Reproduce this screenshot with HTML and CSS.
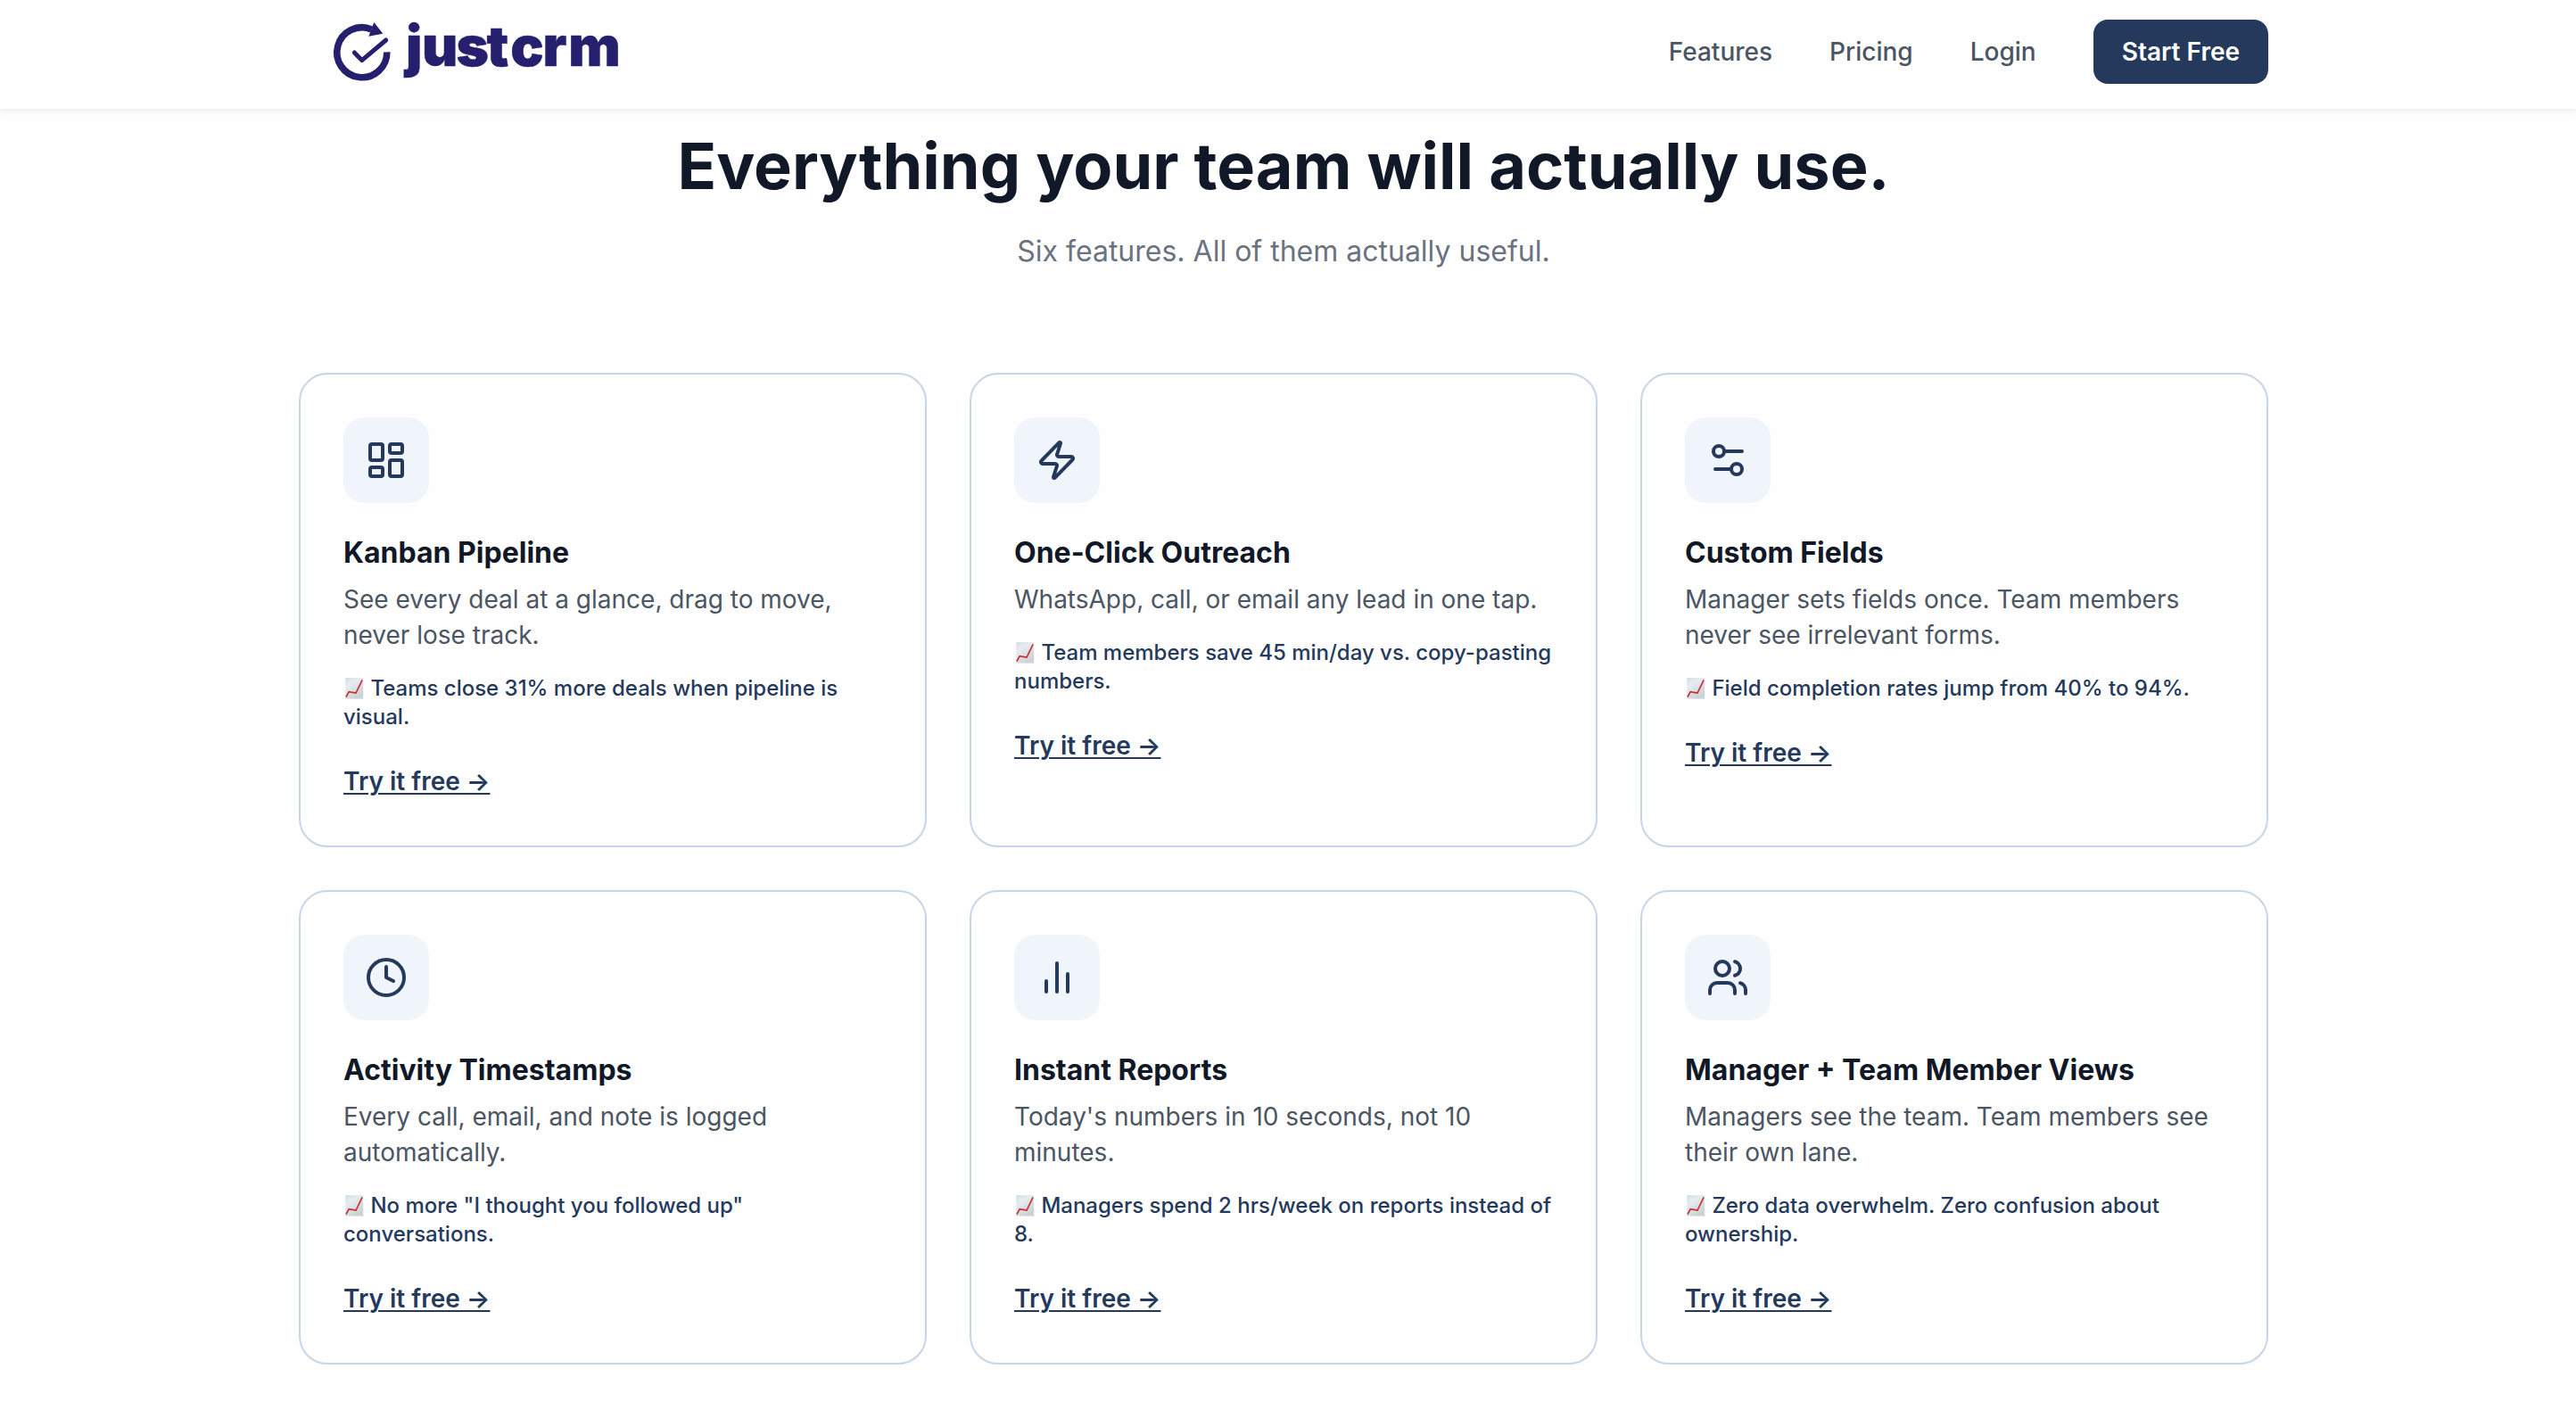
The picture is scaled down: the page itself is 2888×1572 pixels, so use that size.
FILE: index.html
```html
<!DOCTYPE html>
<html lang="en">
<head>
  <meta charset="UTF-8" />
  <meta name="viewport" content="width=device-width, initial-scale=1.0"/>
  <title>justcrm - Features</title>
  <link rel="stylesheet" href="styles.css">
</head>
<body>

  <!-- Shared chart icon for the stat lines -->
  <svg class="defs" width="0" height="0">
    <defs>
      <linearGradient id="paper" x1="0" y1="0" x2="0.6" y2="1">
        <stop offset="0" stop-color="#d5dce2"/>
        <stop offset="0.35" stop-color="#e6ecf2"/>
        <stop offset="1" stop-color="#ccd1d5"/>
      </linearGradient>
      <symbol id="chart" viewBox="0 0 24 24">
        <rect x="2.2" y="0" width="20" height="23.6" fill="url(#paper)"/>
        <path d="M3 21.5 6.2 15.6 14 17 21.2 2.4" fill="none" stroke="#c4302b" stroke-width="1.6"/>
      </symbol>
    </defs>
  </svg>

  <header>
    <div class="container nav">
      <a class="logo" href="#">
        <svg width="380" height="72" viewBox="-1 0 380 72">
          <path class="ring" d="M97.8 36.4A28 28 0 1 1 80.5 10.9"/>
          <path class="arrow" d="M83.3 3 93.3 15.7 77.3 18.7z"/>
          <path class="check" d="M61.3 37 69.7 45.6 96.7 23"/>
          <text x="119.1 137 175.4 209.4 236.2 272.4 301.2" y="52">justcrm</text>
        </svg>
      </a>
      <nav>
        <a href="#features">Features</a>
        <a href="#pricing">Pricing</a>
        <a href="#login">Login</a>
        <a class="btn" href="#start">Start Free</a>
      </nav>
    </div>
  </header>

  <main class="container" id="features">
    <h1>Everything your team will actually use.</h1>
    <p class="subtitle">Six features. All of them actually useful.</p>

    <div class="grid">
      <div class="card">
        <div class="icon">
          <svg viewBox="0 0 24 24"><rect x="3" y="3" width="7" height="9" rx="1"/><rect x="14" y="3" width="7" height="5" rx="1"/><rect x="14" y="12" width="7" height="9" rx="1"/><rect x="3" y="16" width="7" height="5" rx="1"/></svg>
        </div>
        <h3>Kanban Pipeline</h3>
        <p class="desc">See every deal at a glance, drag to move, never lose track.</p>
        <p class="stat"><svg class="chart"><use href="#chart"/></svg> Teams close 31% more deals when pipeline is visual.</p>
        <a class="try" href="#start">Try it free →</a>
      </div>

      <div class="card">
        <div class="icon">
          <svg viewBox="0 0 24 24"><path d="M4 14a1 1 0 0 1-.78-1.63l9.9-10.2a.5.5 0 0 1 .86.46l-1.92 6.02A1 1 0 0 0 13 10h7a1 1 0 0 1 .78 1.63l-9.9 10.2a.5.5 0 0 1-.86-.46l1.92-6.02A1 1 0 0 0 11 14z"/></svg>
        </div>
        <h3>One-Click Outreach</h3>
        <p class="desc">WhatsApp, call, or email any lead in one tap.</p>
        <p class="stat"><svg class="chart"><use href="#chart"/></svg> Team members save 45 min/day vs. copy-pasting numbers.</p>
        <a class="try" href="#start">Try it free →</a>
      </div>

      <div class="card">
        <div class="icon">
          <svg viewBox="0 0 24 24"><path d="M20 7h-9"/><path d="M14 17H5"/><circle cx="17" cy="17" r="3"/><circle cx="7" cy="7" r="3"/></svg>
        </div>
        <h3>Custom Fields</h3>
        <p class="desc">Manager sets fields once. Team members never see irrelevant forms.</p>
        <p class="stat"><svg class="chart"><use href="#chart"/></svg> Field completion rates jump from 40% to 94%.</p>
        <a class="try" href="#start">Try it free →</a>
      </div>

      <div class="card">
        <div class="icon">
          <svg viewBox="0 0 24 24"><circle cx="12" cy="12" r="10"/><polyline points="12 6 12 12 16 14"/></svg>
        </div>
        <h3>Activity Timestamps</h3>
        <p class="desc">Every call, email, and note is logged automatically.</p>
        <p class="stat"><svg class="chart"><use href="#chart"/></svg> No more "I thought you followed up" conversations.</p>
        <a class="try" href="#start">Try it free →</a>
      </div>

      <div class="card">
        <div class="icon">
          <svg viewBox="0 0 24 24"><path d="M18 20V10"/><path d="M12 20V4"/><path d="M6 20v-6"/></svg>
        </div>
        <h3>Instant Reports</h3>
        <p class="desc">Today's numbers in 10 seconds, not 10 minutes.</p>
        <p class="stat"><svg class="chart"><use href="#chart"/></svg> Managers spend 2 hrs/week on reports instead of 8.</p>
        <a class="try" href="#start">Try it free →</a>
      </div>

      <div class="card">
        <div class="icon">
          <svg viewBox="0 0 24 24"><path d="M16 21v-2a4 4 0 0 0-4-4H6a4 4 0 0 0-4 4v2"/><circle cx="9" cy="7" r="4"/><path d="M22 21v-2a4 4 0 0 0-3-3.87"/><path d="M16 3.13a4 4 0 0 1 0 7.75"/></svg>
        </div>
        <h3>Manager + Team Member Views</h3>
        <p class="desc">Managers see the team. Team members see their own lane.</p>
        <p class="stat"><svg class="chart"><use href="#chart"/></svg> Zero data overwhelm. Zero confusion about ownership.</p>
        <a class="try" href="#start">Try it free →</a>
      </div>
    </div>
  </main>

</body>
</html>
```
FILE: styles.css
```css
* { box-sizing: border-box; }

body {
  margin: 0;
  font-family: Inter, 'Liberation Sans', sans-serif;
  font-size: 32px;
  line-height: 1.5;
  color: #111827;
  background-color: #fefefe;
}

h1, h3, p { margin: 0; }

.defs { display: block; }

.container {
  width: 2208px;
  margin-left: 335px;
}

header {
  height: 124px;
  padding-top: 22px;
  background-color: #fefefe;
  border-bottom: 2px solid #f3f3f4;
  box-shadow: 0 2px 6px rgba(0,0,0,0.05);
}

.nav {
  display: flex;
  justify-content: space-between;
  align-items: center;
  height: 72px;
}

.logo svg {
  display: block;
  overflow: visible;
}

.logo text {
  font-size: 62px;
  font-weight: 900;
  fill: #261f6e;
  stroke: #261f6e;
  stroke-width: 0.5;
}

.ring {
  fill: none;
  stroke: #261f6e;
  stroke-width: 7.6;
}

.arrow { fill: #261f6e; }

.check {
  fill: none;
  stroke: #261f6e;
  stroke-width: 5;
  stroke-linecap: round;
  stroke-linejoin: round;
}

nav {
  display: flex;
  align-items: center;
  gap: 64px;
}

nav a {
  font-size: 28px;
  font-weight: 500;
  color: #4b5563;
  text-decoration: none;
}

nav .btn {
  height: 72px;
  padding: 0 32px;
  line-height: 72px;
  border-radius: 16px;
  background-color: #24395c;
  color: white;
  font-weight: 600;
}

main {
  padding-top: 22px;
}

h1 {
  font-size: 72px;
  line-height: 80px;
  font-weight: 700;
  text-align: center;
}

.subtitle {
  margin-top: 32px;
  margin-bottom: 112px;
  color: #6b7280;
  text-align: center;
}

.grid {
  display: grid;
  grid-template-columns: repeat(3, 1fr);
  gap: 48px;
}

.card {
  height: 532px;
  padding: 48px;
  border: 2px solid #c8d5e8;
  border-radius: 32px;
}

.icon {
  display: flex;
  justify-content: center;
  align-items: center;
  width: 96px;
  height: 96px;
  margin-bottom: 32px;
  border-radius: 24px;
  background-color: #f0f5fc;
}

.icon svg {
  width: 48px;
  height: 48px;
  fill: none;
  stroke: #24395c;
  stroke-width: 2;
  stroke-linecap: round;
  stroke-linejoin: round;
}

.card h3 {
  font-size: 32px;
  font-weight: 700;
  margin-bottom: 8px;
}

.desc {
  font-size: 28px;
  line-height: 40px;
  color: #4b5563;
  margin-bottom: 24px;
}

.stat {
  font-size: 24px;
  line-height: 32px;
  font-weight: 500;
  color: #24395c;
  margin-bottom: 32px;
}

.chart {
  width: 24px;
  height: 24px;
  vertical-align: -4px;
}

.try {
  display: block;
  font-size: 28px;
  line-height: 48px;
  font-weight: 600;
  color: #24395c;
  text-decoration-thickness: 2px;
  text-underline-offset: 3px;
}
```
